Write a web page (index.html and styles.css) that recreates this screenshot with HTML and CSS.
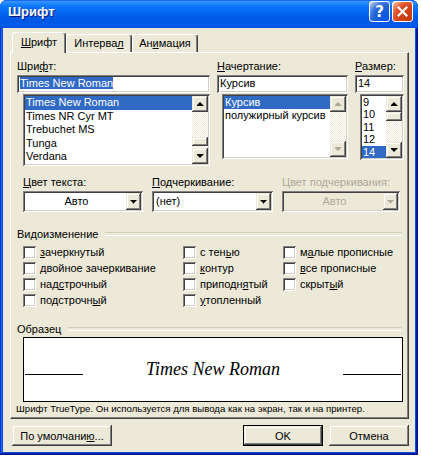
FILE: index.html
```html
<!DOCTYPE html>
<html lang="ru">
<head>
    <meta charset="UTF-8">
    <title>Шрифт</title>
    <link rel="stylesheet" href="styles.css">
</head>
<body>
    <div class="window">
        <div class="titlebar">
            <span class="title">Шрифт</span>
            <div class="tb-buttons">
                <span class="tb-btn tb-help">?</span>
                <span class="tb-btn tb-close">
                    <svg width="11" height="11" viewBox="0 0 11 11"><path d="M1.5 1.5l8 8M9.5 1.5l-8 8" stroke="#fff" stroke-width="2.2" stroke-linecap="square"/></svg>
                </span>
            </div>
        </div>
        <div class="client">
            <div class="tabs">
                <div class="tab tab-font active"><u>Ш</u>рифт</div>
                <div class="tab tab-spacing">Интерва<u>л</u></div>
                <div class="tab tab-anim">Ан<u>и</u>мация</div>
            </div>
            <div class="panel">
                <!-- font / style / size -->
                <div class="font-row">
                    <div class="col col-font">
                        <span class="field-label">Шри<u>ф</u>т:</span>
                        <div class="textbox"><span class="sel">Times New Roman</span></div>
                        <div class="listbox">
                            <ul class="items">
                                <li class="selected">Times New Roman</li>
                                <li>Times NR Cyr MT</li>
                                <li>Trebuchet MS</li>
                                <li>Tunga</li>
                                <li>Verdana</li>
                            </ul>
                            <div class="scrollbar">
                                <span class="sb-btn up"></span>
                                <span class="sb-track"><span class="sb-thumb at-end"></span></span>
                                <span class="sb-btn down"></span>
                            </div>
                        </div>
                    </div>
                    <div class="col col-style">
                        <span class="field-label"><u>Н</u>ачертание:</span>
                        <div class="textbox">Курсив</div>
                        <div class="listbox short">
                            <ul class="items compact">
                                <li class="selected">Курсив</li>
                                <li>полужирный курсив</li>
                            </ul>
                            <div class="scrollbar disabled">
                                <span class="sb-btn up"></span>
                                <span class="sb-track"></span>
                                <span class="sb-btn down"></span>
                            </div>
                        </div>
                    </div>
                    <div class="col col-size">
                        <span class="field-label"><u>Р</u>азмер:</span>
                        <div class="textbox">14</div>
                        <div class="listbox short size-list">
                            <ul class="items tight">
                                <li>9</li>
                                <li>10</li>
                                <li>11</li>
                                <li>12</li>
                                <li class="selected">14</li>
                            </ul>
                            <div class="scrollbar">
                                <span class="sb-btn up"></span>
                                <span class="sb-track"><span class="sb-thumb"></span></span>
                                <span class="sb-btn down"></span>
                            </div>
                        </div>
                    </div>
                </div>

                <!-- colours and underline -->
                <div class="combo-row">
                    <div>
                        <span class="field-label"><u>Ц</u>вет текста:</span>
                        <div class="combo"><span class="combo-text center">Авто</span><span class="combo-btn"></span></div>
                    </div>
                    <div>
                        <span class="field-label"><u>П</u>одчеркивание:</span>
                        <div class="combo"><span class="combo-text">(нет)</span><span class="combo-btn"></span></div>
                    </div>
                    <div class="is-disabled">
                        <span class="field-label">Цвет подчеркивания:</span>
                        <div class="combo disabled"><span class="combo-text center">Авто</span><span class="combo-btn"></span></div>
                    </div>
                </div>

                <!-- effects -->
                <div class="group group-effects">
                    <div class="group-head">Видоизменение</div>
                    <div class="checks">
                        <label class="check"><span class="box"></span><span><u>з</u>ачеркнутый</span></label>
                        <label class="check"><span class="box"></span><span><u>д</u>войное зачеркивание</span></label>
                        <label class="check"><span class="box"></span><span>над<u>с</u>трочный</span></label>
                        <label class="check"><span class="box"></span><span>подстрочн<u>ы</u>й</span></label>
                        <label class="check"><span class="box"></span><span>с тен<u>ь</u>ю</span></label>
                        <label class="check"><span class="box"></span><span><u>к</u>онтур</span></label>
                        <label class="check"><span class="box"></span><span>приподн<u>я</u>тый</span></label>
                        <label class="check"><span class="box"></span><span><u>у</u>топленный</span></label>
                        <label class="check"><span class="box"></span><span>м<u>а</u>лые прописные</span></label>
                        <label class="check"><span class="box"></span><span><u>в</u>се прописные</span></label>
                        <label class="check"><span class="box"></span><span>скрыт<u>ы</u>й</span></label>
                    </div>
                </div>

                <!-- sample -->
                <div class="group group-sample">
                    <div class="group-head">Образец</div>
                    <div class="preview">
                        <span class="rule"></span>
                        <span class="sample-text">Times New Roman</span>
                        <span class="rule"></span>
                    </div>
                </div>
                <p class="desc">Шрифт TrueType. Он используется для вывода как на экран, так и на принтер.</p>
            </div>

            <div class="buttons">
                <button class="btn btn-wide">По умолчани<u>ю</u>...</button>
                <button class="btn btn-ok default">OK</button>
                <button class="btn btn-cancel">Отмена</button>
            </div>
        </div>
    </div>
</body>
</html>
```

FILE: styles.css
```css
* {
    margin: 0;
    padding: 0;
    box-sizing: border-box;
}
body {
    background: #fff;
    font-family: "Liberation Sans", Arial, sans-serif;
    font-size: 11px;
    color: #000;
}
u {
    text-decoration: underline;
    text-underline-offset: 1px;
}

/* window frame */
.window {
    width: 418px;
    height: 455px;
    display: flex;
    flex-direction: column;
    background: #0b50dd;
    border-radius: 7px 7px 0 0;
    box-shadow: inset -1px -1px #00138c, inset 1px 1px #0831d9, inset -2px -2px #001ea0, inset 2px 2px #166aee;
}
.titlebar {
    height: 28px;
    display: flex;
    justify-content: space-between;
    align-items: flex-start;
    padding: 0 5px 0 8px;
    border-radius: 7px 7px 0 0;
    background: linear-gradient(#0058ee, #3a93ff 5%, #1a84ff 14%, #0a72fb 28%, #0466ee 45%, #005ae6 62%, #0057e5 80%, #005cf0 92%, #004cd6);
}
.title {
    color: #fff;
    font-weight: bold;
    font-size: 13px;
    line-height: 16px;
    padding-top: 4px;
    text-shadow: 1px 1px #0a1883;
}
.tb-buttons {
    display: flex;
    gap: 2px;
    margin-top: 1px;
}
.tb-btn {
    width: 21px;
    height: 21px;
    border: 1px solid #fff;
    border-radius: 3px;
    display: flex;
    align-items: center;
    justify-content: center;
    color: #fff;
}
.tb-help {
    background: radial-gradient(circle at 90% 90%, #0054e9, #2263d5 55%, #4479e4 70%, #a3bbec 90%, #fff);
    font-weight: bold;
    font-size: 15px;
    font-family: "DejaVu Sans", sans-serif;
}
.tb-close {
    background: radial-gradient(circle at 90% 90%, #c23a0a, #d9441c 55%, #e0603a 70%, #f4a98f 90%, #fff);
}

.client {
    flex: 1;
    margin: 0 3px 3px;
    background: #ece9d8;
    padding: 4px 6px 0 7px;
    display: flex;
    flex-direction: column;
}

/* tabs */
.tabs {
    display: flex;
    align-items: flex-end;
    height: 20px;
    padding-left: 2px;
    position: relative;
    z-index: 1;
}
.tab {
    height: 18px;
    border: 1px solid;
    border-color: #fff #404040 transparent #fff;
    border-bottom: none;
    border-radius: 3px 3px 0 0;
    box-shadow: inset -1px 0 #808080;
    text-align: center;
    line-height: 17px;
    white-space: nowrap;
}
.tab.active {
    height: 21px;
    margin-bottom: -1px;
    background: #ece9d8;
    line-height: 18px;
}
.tab-font { width: 54px; }
.tab-spacing { width: 66px; }
.tab-anim { width: 66px; }

.panel {
    height: 367px;
    border: 1px solid;
    border-color: #fff #404040 #404040 #fff;
    box-shadow: inset -1px -1px #808080;
    padding: 7px 4px 0 6px;
}

/* sunken / raised helpers */
.textbox, .listbox, .combo, .box {
    box-shadow: inset 1px 1px #808080, inset -1px -1px #fff, inset 2px 2px #404040, inset -2px -2px #d4d0c8;
}
.sb-btn, .sb-thumb, .combo-btn, .btn {
    background: #ece9d8;
    box-shadow: inset -1px -1px #404040, inset 1px 1px #ece9d8, inset -2px -2px #808080, inset 2px 2px #fff;
}

/* font / style / size */
.font-row {
    display: flex;
    gap: 7px;
}
.col-font { width: 193px; }
.col-style { width: 131px; }
.col-size { width: 49px; }
.field-label {
    display: block;
    line-height: 13px;
    margin-bottom: 2px;
    white-space: nowrap;
}
.textbox {
    height: 18px;
    background: #fff;
    padding: 2px 3px;
    line-height: 13px;
    white-space: nowrap;
    overflow: hidden;
}
.textbox .sel {
    background: #316ac5;
    color: #fff;
}
.listbox {
    display: flex;
    height: 72px;
    margin: 1px 0 0 6px;
    padding: 2px;
    background: #fff;
}
.listbox.short {
    height: 65px;
    margin-left: 5px;
}
.listbox.size-list {
    height: 66px;
}
.items {
    flex: 1;
    list-style: none;
    overflow: hidden;
}
.items li {
    height: 13.5px;
    line-height: 13.5px;
    padding-left: 1px;
    white-space: nowrap;
}
.items.compact li {
    height: 12.75px;
    line-height: 12.75px;
}
.items.tight li {
    height: 12.4px;
    line-height: 12.4px;
}
.items li.selected {
    background: #316ac5;
    color: #fff;
}

/* scrollbars */
.scrollbar {
    width: 16px;
    display: flex;
    flex-direction: column;
}
.sb-btn {
    height: 16px;
    flex: none;
    display: flex;
    align-items: center;
    justify-content: center;
}
.sb-btn::after, .combo-btn::after {
    content: "";
    width: 7px;
    height: 4px;
    background: #000;
}
.sb-btn.up::after {
    clip-path: polygon(3px 0, 4px 0, 4px 1px, 5px 1px, 5px 2px, 6px 2px, 6px 3px, 7px 3px, 7px 4px, 0 4px, 0 3px, 1px 3px, 1px 2px, 2px 2px, 2px 1px, 3px 1px);
}
.sb-btn.down::after, .combo-btn::after {
    clip-path: polygon(0 0, 7px 0, 7px 1px, 6px 1px, 6px 2px, 5px 2px, 5px 3px, 4px 3px, 4px 4px, 3px 4px, 3px 3px, 2px 3px, 2px 2px, 1px 2px, 1px 1px, 0 1px);
}
.scrollbar.disabled .sb-btn::after {
    background: #aca899;
}
.sb-track {
    flex: 1;
    display: flex;
    flex-direction: column;
    background: repeating-conic-gradient(#fff 0 25%, #ece9d8 0 50%) 0 0 / 2px 2px;
}
.sb-thumb {
    height: 9px;
}
.sb-thumb.at-end {
    margin-top: auto;
    margin-bottom: 2px;
}

/* combos */
.combo-row {
    display: grid;
    grid-template-columns: 120px 121px 118px;
    column-gap: 9px;
    margin: 10px 0 0 6px;
}
.is-disabled .field-label {
    color: #aca899;
}
.combo {
    height: 21px;
    display: flex;
    padding: 2px;
    background: #fff;
}
.combo-text {
    flex: 1;
    line-height: 17px;
    padding-left: 2px;
    white-space: nowrap;
}
.combo-text.center {
    text-align: center;
}
.combo-btn {
    width: 15px;
    display: flex;
    align-items: center;
    justify-content: center;
}
.combo.disabled {
    background: #ece9d8;
    color: #aca899;
}
.combo.disabled .combo-btn::after {
    background: #aca899;
}

/* groups */
.group {
    margin-right: 2px;
}
.group-effects {
    margin-top: 16px;
}
.group-sample {
    margin-top: 15px;
}
.group-head {
    display: flex;
    align-items: flex-start;
    line-height: 13px;
    white-space: nowrap;
}
.group-head::after {
    content: "";
    flex: 1;
    height: 2px;
    margin: 4px 0 0 7px;
    border-top: 1px solid #d0d0bf;
    border-bottom: 1px solid #fff;
}
.checks {
    display: grid;
    grid-template-columns: 160px 100px 1fr;
    grid-template-rows: repeat(4, 16px);
    grid-auto-flow: column;
    margin: 3px 0 0 6px;
}
.check {
    display: flex;
    align-items: center;
    gap: 4px;
    white-space: nowrap;
}
.box {
    width: 13px;
    height: 13px;
    flex: none;
    background: #fff;
}

/* sample */
.preview {
    width: 380px;
    height: 65px;
    margin: 1px 0 0 6px;
    padding: 21px 1px 0;
    border: 1px solid #000;
    background: #fff;
    display: flex;
    justify-content: space-between;
    align-items: baseline;
}
.rule {
    width: 58px;
    height: 1px;
    background: #000;
}
.sample-text {
    font-family: "Liberation Serif", "Times New Roman", serif;
    font-style: italic;
    font-size: 18px;
    line-height: 20px;
}
.desc {
    font-size: 9.6px;
    line-height: 13px;
    margin-left: -1px;
    white-space: nowrap;
}

/* dialog buttons */
.buttons {
    display: flex;
    gap: 6px;
    margin-top: 6px;
    padding-left: 2px;
}
.btn {
    height: 21px;
    border: none;
    font: inherit;
    color: #000;
    padding-top: 1px;
    text-align: center;
}
.btn-wide { width: 100px; }
.btn-ok {
    width: 80px;
    margin-left: auto;
}
.btn-cancel { width: 80px; }
.btn.default {
    border: 1px solid #000;
}
```
